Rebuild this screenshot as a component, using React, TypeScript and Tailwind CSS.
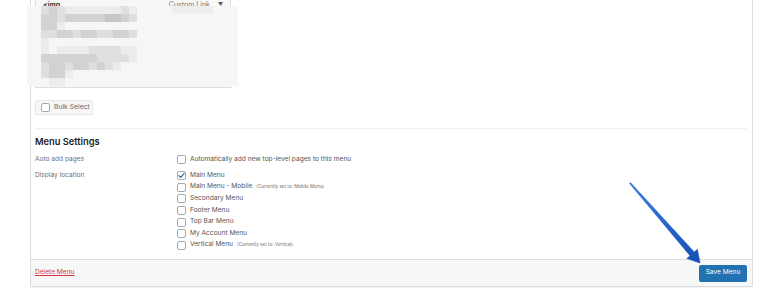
import React from "react";

const shades = ["transparent", "#ebeced", "#dedfe0", "#d1d2d3", "#c5c6c7"];
const grid: number[][] = [
  [2, 3, 2, 1, 1, 1, 1, 1, 1, 1, 2, 1],
  [3, 3, 2, 3, 3, 3, 3, 3, 4, 4, 3, 2],
  [3, 3, 1, 0, 0, 0, 0, 0, 0, 0, 0, 0],
  [2, 2, 3, 3, 2, 3, 3, 2, 2, 3, 3, 2],
  [1, 0, 0, 0, 0, 0, 0, 0, 0, 0, 0, 0],
  [1, 0, 1, 1, 1, 1, 2, 2, 2, 2, 1, 1],
  [3, 3, 3, 3, 3, 3, 3, 2, 2, 2, 2, 1],
  [2, 3, 3, 2, 3, 3, 2, 3, 2, 1, 0, 0],
  [2, 3, 3, 1, 0, 0, 0, 0, 0, 0, 0, 0],
  [0, 1, 1, 0, 0, 0, 0, 0, 0, 0, 0, 0],
];

function Box({ checked = false }: { checked?: boolean }) {
  return (
    <span className="relative flex h-[9px] w-[9px] shrink-0 items-center justify-center rounded-[2px] border border-[#a7aaad] bg-white">
      {checked && (
        <svg width="9" height="9" viewBox="0 0 10 10" className="absolute">
          <path d="M2.2 5.2 L4.2 7.2 L8 2.6" fill="none" stroke="#2271b1" strokeWidth="1.3" strokeLinecap="round" strokeLinejoin="round" />
        </svg>
      )}
    </span>
  );
}

const locations: { name: string; note?: string; checked?: boolean }[] = [
  { name: "Main Menu", checked: true },
  { name: "Main Menu - Mobile", note: "(Currently set to: Mobile Menu)" },
  { name: "Secondary Menu" },
  { name: "Footer Menu" },
  { name: "Top Bar Menu" },
  { name: "My Account Menu" },
  { name: "Vertical Menu", note: "(Currently set to: Vertical)" },
];

export default function App() {
  return (
    <div
      className="relative h-[301px] w-[768px] overflow-hidden bg-white text-[#555555]"
      style={{ fontFamily: "Inter, 'Liberation Sans', sans-serif" }}
    >
      <div className="ml-[30px] flex w-[723px] flex-col rounded-b-[2px] border border-t-0 border-[#dcdcde] shadow-[0_1px_1px_rgba(0,0,0,0.04)]">
        {/* body */}
        <div className="flex h-[259px] flex-col pl-[4px] pr-[5px]">
          {/* menu item box */}
          <div className="mt-[-8px] flex h-[96px] w-[196px] flex-col border border-[#dcdcde] bg-[#f6f7f7]">
            <div className="flex h-[24px] items-center justify-between pl-[7px] pr-[7px]">
              <span className="text-[7px] font-semibold text-[#1d2327]">&lt;img</span>
              <span className="flex items-center gap-[8px] text-[7px] text-[#777777]">
                Custom Link
                <span className="text-[5px] text-[#555555]">▼</span>
              </span>
            </div>
          </div>

          {/* bulk select */}
          <div className="mt-[12px] flex h-[15px] w-[58px] items-center gap-[4px] rounded-[2px] border border-[#e6e7e8] bg-[#f6f7f7] pl-[5px]">
            <Box />
            <span className="text-[6.8px] text-[#6b6b6b]">Bulk Select</span>
          </div>

          <div className="mt-[13px] border-t border-[#f0f0f1]" />

          <div className="mt-[6px] h-[14px] text-[9.3px] font-semibold leading-[14px] text-[#1d2327]">Menu Settings</div>

          <div className="mt-[5px] flex h-[12px] items-center">
            <span className="w-[142px] text-[6.6px] text-[#707070]">Auto add pages</span>
            <span className="flex items-center gap-[4px]">
              <Box />
              <span className="text-[6.6px] text-[#555555]">Automatically add new top-level pages to this menu</span>
            </span>
          </div>

          <div className="mt-[4px] flex">
            <span className="flex h-[11.6px] w-[142px] items-center text-[6.6px] text-[#707070]">Display location</span>
            <div className="flex flex-col">
              {locations.map((l) => (
                <div key={l.name} className="flex h-[11.6px] items-center gap-[4px]">
                  <Box checked={l.checked} />
                  <span className="text-[6.6px] text-[#555555]">{l.name}</span>
                  {l.note && <span className="text-[4.6px] text-[#707070]">{l.note}</span>}
                </div>
              ))}
            </div>
          </div>
        </div>

        {/* footer */}
        <div className="flex h-[27px] items-center justify-between border-t border-[#dcdcde] bg-[#f6f7f7] pl-[4px] pr-[5px]">
          <span className="text-[6.6px] text-[#d63638] underline">Delete Menu</span>
          <span className="flex h-[17px] w-[48px] items-center justify-center rounded-[2px] bg-[#2271b1] text-[6.6px] text-white">
            Save Menu
          </span>
        </div>
      </div>

      {/* pixelated blur overlay */}
      <div className="absolute left-[27px] top-[6px] h-[80px] w-[211px] bg-[#f5f6f6] blur-[0.4px]">
        <div className="absolute left-[145px] top-0 h-[8px] w-[41px] bg-[#edeeee]" />
        <div className="absolute left-[14px] top-0 grid grid-cols-[repeat(12,8px)]">
          {grid.flatMap((row, r) =>
            row.map((v, c) => (
              <div key={r + "-" + c} className="h-[8px] w-[8px]" style={{ background: shades[v] }} />
            ))
          )}
        </div>
      </div>

      {/* arrow */}
      <svg className="absolute left-0 top-0" width="768" height="301" viewBox="0 0 768 301">
        <defs>
          <linearGradient id="ag" x1="630" y1="183" x2="700" y2="263" gradientUnits="userSpaceOnUse">
            <stop offset="0" stopColor="#3b7be0" />
            <stop offset="1" stopColor="#1450b4" />
          </linearGradient>
        </defs>
        <polygon
          points="630.5,182.6 694.2,252.05 697.4,249.3 700,263 686.8,258.5 690,255.7 629.5,183.4"
          fill="url(#ag)"
          stroke="url(#ag)"
          strokeWidth="0.6"
          strokeLinejoin="round"
        />
      </svg>
    </div>
  );
}
